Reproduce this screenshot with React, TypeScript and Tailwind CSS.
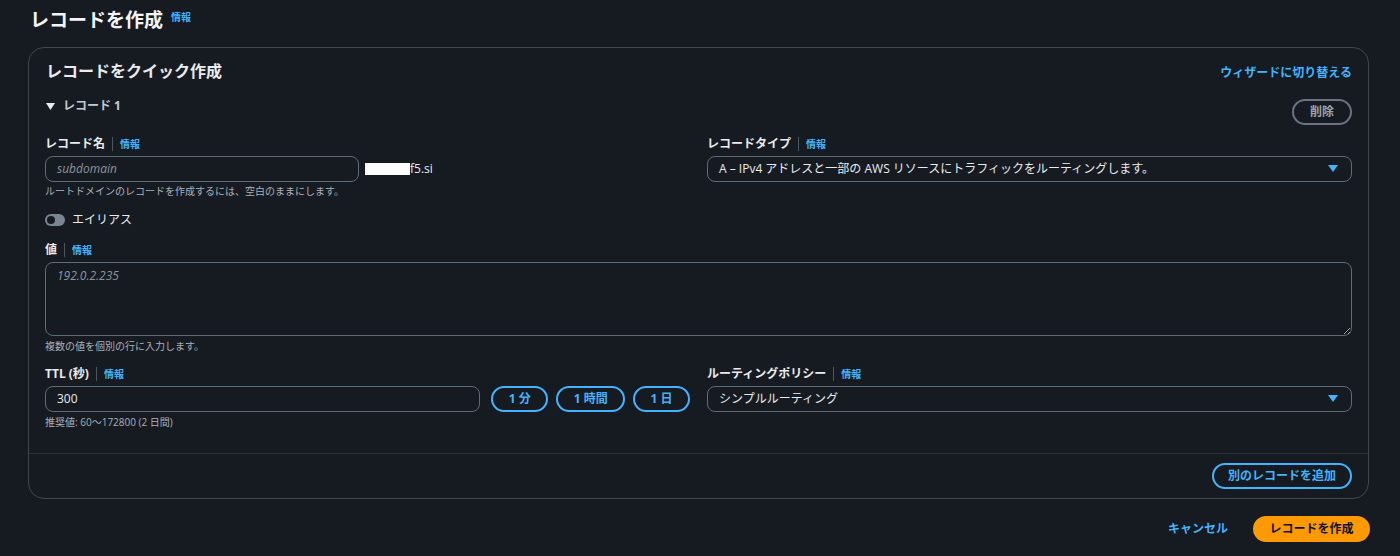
import React from 'react';

const Info: React.FC = () => (
  <span className="text-[10px] font-bold text-[#42b4ff] leading-none">情報</span>
);

const Label: React.FC<{ text: string }> = ({ text }) => (
  <div className="flex items-center h-4">
    <span className="text-[12px] font-bold text-[#e9ebed] leading-none">{text}</span>
    <span className="mx-[7px] h-[14px] w-px bg-[#4b5563]" />
    <Info />
  </div>
);

const Caret: React.FC = () => (
  <svg width="10" height="8" viewBox="0 0 10 8">
    <path d="M0 0h10L5 7z" fill="#42b4ff" />
  </svg>
);

const Select: React.FC<{ value: string }> = ({ value }) => (
  <div className="mt-1 h-[26px] flex items-center justify-between rounded-lg border border-[#5f6b7a] pl-[11px] pr-[13px]">
    <span className="text-[12px] text-[#e9ebed]">{value}</span>
    <Caret />
  </div>
);

const Hint: React.FC<{ text: string; className?: string }> = ({ text, className = '' }) => (
  <div className={`text-[10px] leading-[14px] text-[#a9b0ba] ${className}`}>{text}</div>
);

const PillButton: React.FC<{ text: string; width: string }> = ({ text, width }) => (
  <button
    type="button"
    className={`h-[26px] ${width} rounded-full border-2 border-[#42b4ff] text-[12px] font-bold text-[#42b4ff]`}
  >
    {text}
  </button>
);

export default function App() {
  return (
    <div className="min-h-[556px] bg-[#161a21] font-['Open_Sans','Noto_Sans_CJK_JP',sans-serif] pl-7 pr-[31px] pt-[6px]">
      {/* page title */}
      <div className="flex items-end h-7 ml-[2px]">
        <h1 className="text-[19px] font-bold text-[#f3f4f6] leading-7">レコードを作成</h1>
        <span className="ml-[8px] mb-[7px]">
          <Info />
        </span>
      </div>

      <div className="mt-[13px] rounded-2xl border border-[#414750] bg-[#161b22]">
        <div className="px-4 pt-[12px] pb-6">
          <div className="flex items-center justify-between h-[22px]">
            <h2 className="text-[16px] font-bold text-[#e9ebed] leading-[22px] ml-px -mt-px">レコードをクイック作成</h2>
            <span className="mt-[3px] text-[12px] font-bold text-[#42b4ff]">ウィザードに切り替える</span>
          </div>

          <div className="mt-[17px] flex items-start justify-between h-[26px]">
            <div className="flex items-center h-[14px] text-[12px] font-bold text-[#c6cbd2]">
              <svg width="9" height="7" viewBox="0 0 9 7" className="ml-px mr-[8px]">
                <path d="M0 0h9L4.5 7z" fill="#e9ebed" />
              </svg>
              レコード 1
            </div>
            <button
              type="button"
              className="h-[26px] w-[60px] rounded-full border-2 border-[#6b7380] text-[12px] font-bold text-[#9ba3ad]"
            >
              削除
            </button>
          </div>

          <div className="mt-[11px] grid grid-cols-2 gap-x-[17px]">
            <div>
              <Label text="レコード名" />
              <div className="mt-1 flex items-center">
                <div className="h-[26px] w-[314px] flex items-center rounded-lg border border-[#5f6b7a] px-[11px]">
                  <span className="text-[12px] italic text-[#8d949e]">subdomain</span>
                </div>
                <span className="ml-[6px] h-3 w-[45px] bg-white" />
                <span className="text-[12px] text-[#e9ebed]">f5.si</span>
              </div>
              <Hint text="ルートドメインのレコードを作成するには、空白のままにします。" className="mt-[2px]" />
            </div>
            <div>
              <Label text="レコードタイプ" />
              <Select value="A – IPv4 アドレスと一部の AWS リソースにトラフィックをルーティングします。" />
            </div>
          </div>

          <div className="mt-[15px] flex items-center h-[14px]">
            <span className="relative h-3 w-5 rounded-full bg-[#7d8592]">
              <span className="absolute left-[2px] top-[2px] h-2 w-2 rounded-full bg-[#161b22]" />
            </span>
            <span className="ml-[7px] text-[12px] text-[#e9ebed]">エイリアス</span>
          </div>

          <div className="mt-[15px]">
            <Label text="値" />
            <textarea
              readOnly
              placeholder="192.0.2.235"
              className="mt-1 block h-[74px] w-full rounded-lg border border-[#5f6b7a] bg-transparent px-[11px] py-[4px] text-[12px] italic text-[#e9ebed] placeholder:text-[#8d949e] outline-none"
            />
            <Hint text="複数の値を個別の行に入力します。" className="mt-[3px]" />
          </div>

          <div className="mt-[13px] grid grid-cols-2 gap-x-[17px]">
            <div>
              <Label text="TTL (秒)" />
              <div className="mt-1 flex items-center gap-2">
                <div className="h-[26px] w-[436px] flex items-center rounded-lg border border-[#5f6b7a] px-[11px] mr-[3px]">
                  <span className="text-[12px] text-[#e9ebed]">300</span>
                </div>
                <PillButton text="1 分" width="w-[57px]" />
                <PillButton text="1 時間" width="w-[69px]" />
                <PillButton text="1 日" width="w-[57px]" />
              </div>
              <Hint text="推奨値: 60〜172800 (2 日間)" className="mt-[3px]" />
            </div>
            <div>
              <Label text="ルーティングポリシー" />
              <Select value="シンプルルーティング" />
            </div>
          </div>
        </div>

        <div className="border-t border-[#2c323b] px-4 pt-[9px] pb-[9px] flex justify-end">
          <PillButton text="別のレコードを追加" width="w-[140px]" />
        </div>
      </div>

      <div className="mt-[17px] flex items-center justify-end gap-[25px] -mr-px">
        <span className="text-[12px] font-bold text-[#42b4ff]">キャンセル</span>
        <button
          type="button"
          className="h-[26px] w-[117px] rounded-full bg-[#ff9900] text-[12px] font-bold text-[#0f141a]"
        >
          レコードを作成
        </button>
      </div>
    </div>
  );
}
